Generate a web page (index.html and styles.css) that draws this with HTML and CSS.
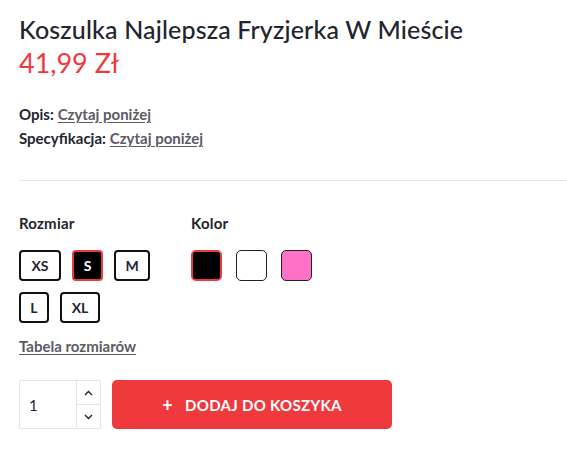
FILE: index.html
```html
<!DOCTYPE html>
<html lang="pl">
<head>
<meta charset="utf-8">
<title>Koszulka Najlepsza Fryzjerka W Mieście</title>
<link rel="stylesheet" href="styles.css">
</head>
<body>
<div class="product">
  <h1 class="title">Koszulka Najlepsza Fryzjerka W Mieście</h1>
  <div class="price">41,99 Zł</div>
  <div class="meta">
    <div class="meta-row"><span class="meta-label">Opis:</span> <a class="meta-link" href="#">Czytaj poniżej</a></div>
    <div class="meta-row"><span class="meta-label">Specyfikacja:</span> <a class="meta-link" href="#">Czytaj poniżej</a></div>
  </div>
  <div class="divider"></div>
  <div class="options">
    <div class="opt-group opt-size">
      <div class="opt-label">Rozmiar</div>
      <div class="sizes">
        <button class="size size-xs">XS</button>
        <button class="size size-s active">S</button>
        <button class="size size-m">M</button>
        <button class="size size-l">L</button>
        <button class="size size-xl">XL</button>
      </div>
    </div>
    <div class="opt-group">
      <div class="opt-label">Kolor</div>
      <div class="colors">
        <span class="swatch swatch-black active"></span>
        <span class="swatch swatch-white"></span>
        <span class="swatch swatch-pink"></span>
      </div>
    </div>
  </div>
  <a class="size-table" href="#">Tabela rozmiarów</a>
  <div class="cart-row">
    <div class="qty">
      <div class="qty-value">1</div>
      <div class="qty-arrows">
        <span class="qty-btn">
          <svg width="9" height="6" viewBox="0 0 9 6"><path d="M1 5 L4.5 1.5 L8 5" fill="none" stroke="#222" stroke-width="1.4"/></svg>
        </span>
        <span class="qty-btn">
          <svg width="9" height="6" viewBox="0 0 9 6"><path d="M1 1 L4.5 4.5 L8 1" fill="none" stroke="#222" stroke-width="1.4"/></svg>
        </span>
      </div>
    </div>
    <button class="add-btn"><span class="plus">+</span>DODAJ DO KOSZYKA</button>
  </div>
</div>
</body>
</html>
```

FILE: styles.css
```css
* { box-sizing: border-box; }
html, body { margin: 0; padding: 0; background: #fff; }
body {
  font-family: "Lato", "Noto Sans", sans-serif;
  color: #222631;
}
.product {
  padding: 12px 0 0 19px;
}
.title {
  margin: 0;
  font-size: 25px;
  font-weight: 500;
  line-height: 35px;
  color: #22252e;
  letter-spacing: 0.15px;
}
.price {
  font-size: 27px;
  font-weight: 400;
  line-height: 32px;
  color: #ef3a3d;
}
.meta {
  margin-top: 23px;
  font-size: 15px;
  line-height: 24px;
}
.meta-label { font-weight: 700; color: #22252e; }
.meta-link {
  color: #5b5b63;
  font-weight: 700;
  text-decoration: underline;
  text-underline-offset: 2px;
}
.divider {
  margin-top: 30px;
  height: 1px;
  background: #e6e6e6;
}
.options {
  display: flex;
  margin-top: 32px;
}
.opt-group { display: flex; flex-direction: column; }
.opt-size { width: 172px; }
.opt-label {
  font-size: 15px;
  font-weight: 700;
  line-height: 20px;
  color: #22252e;
  letter-spacing: 0.2px;
}
.sizes {
  display: flex;
  flex-wrap: wrap;
  gap: 11px;
  max-width: 140px;
  margin-top: 17px;
}
.size {
  height: 31px;
  border: 2px solid #111;
  border-radius: 4px;
  background: #fff;
  font-family: inherit;
  font-size: 14px;
  font-weight: 700;
  color: #1f2533;
  padding: 0;
  display: flex;
  align-items: center;
  justify-content: center;
}
.size-xs { width: 42px; }
.size-s { width: 31px; }
.size-m { width: 36px; }
.size-l { width: 30px; }
.size-xl { width: 40px; }
.size.active {
  background: #000;
  color: #fff;
  border-color: #ef3a3d;
}
.colors {
  display: flex;
  gap: 14px;
  margin-top: 17px;
}
.swatch {
  width: 31px;
  height: 31px;
  border: 1px solid #222;
  border-radius: 5px;
}
.swatch-black { background: #000; }
.swatch-white { background: #fff; }
.swatch-pink { background: #ff72c8; }
.swatch.active { border: 2px solid #ef3a3d; }
.size-table {
  display: inline-block;
  margin-top: 13px;
  font-size: 15px;
  font-weight: 700;
  line-height: 20px;
  color: #5b5b63;
  text-decoration: underline;
  text-underline-offset: 2px;
}
.cart-row {
  display: flex;
  gap: 11px;
  margin-top: 24px;
}
.qty {
  display: flex;
  width: 82px;
  height: 49px;
  border: 1px solid #e5e5e5;
}
.qty-value {
  flex: 1;
  display: flex;
  align-items: center;
  padding-left: 9px;
  font-size: 15px;
  color: #22252e;
}
.qty-arrows {
  width: 24px;
  border-left: 1px solid #e5e5e5;
  display: flex;
  flex-direction: column;
}
.qty-btn {
  flex: 1;
  display: flex;
  align-items: center;
  justify-content: center;
}
.qty-btn + .qty-btn { border-top: 1px solid #e5e5e5; }
.add-btn {
  width: 280px;
  height: 49px;
  border: none;
  border-radius: 5px;
  background: #ef3a3d;
  color: #fff;
  font-family: inherit;
  font-size: 15px;
  font-weight: 700;
  letter-spacing: 0.3px;
  display: flex;
  align-items: center;
  justify-content: center;
  padding: 0;
}
.plus {
  font-size: 18px;
  margin-right: 12px;
}
```
